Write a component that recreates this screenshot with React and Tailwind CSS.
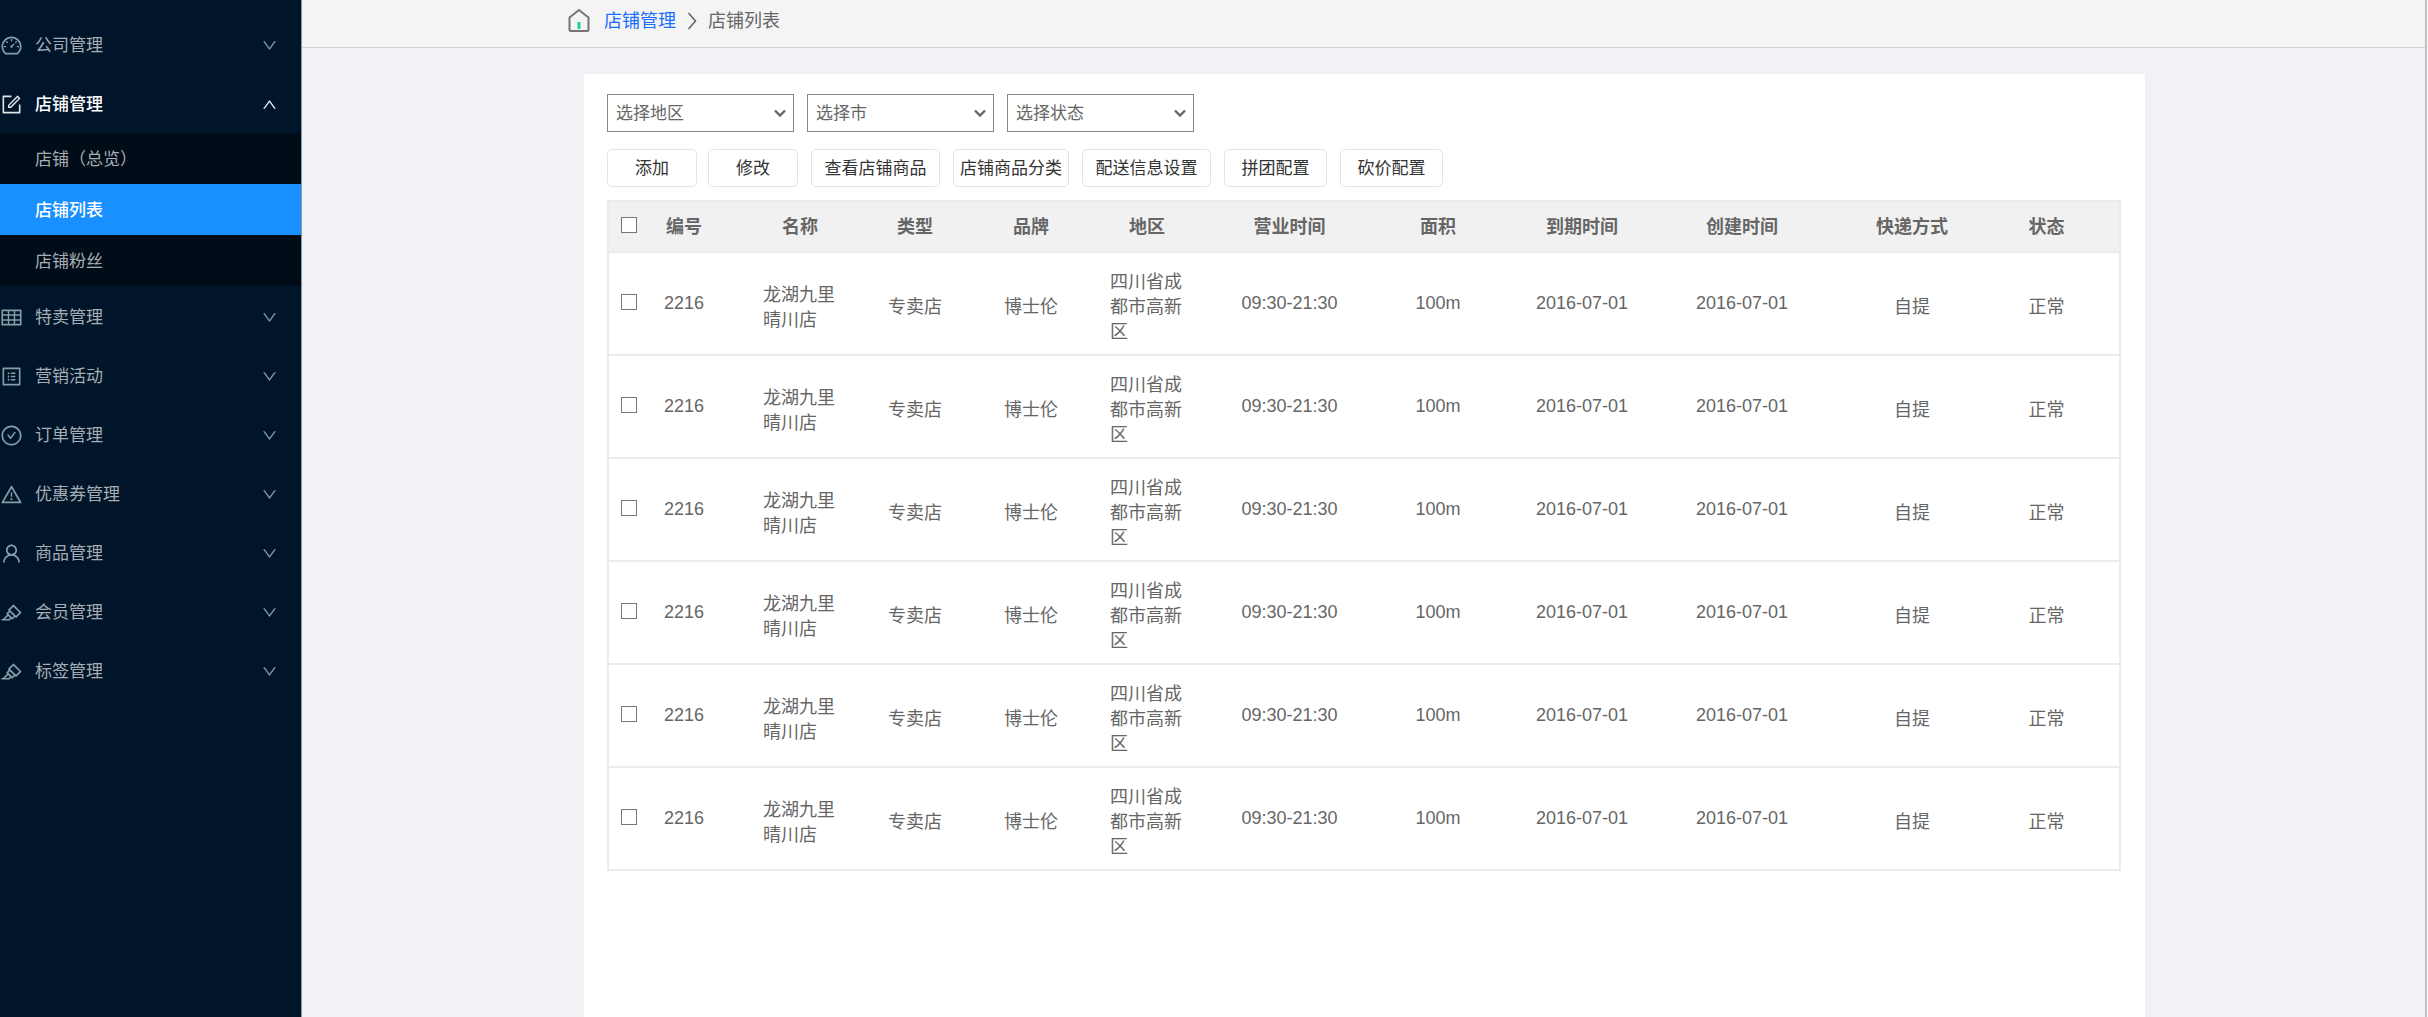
import { useState } from "react"
import {
  AiOutlineDashboard,
  AiOutlineForm,
  AiOutlineTable,
  AiOutlineProfile,
  AiOutlineCheckCircle,
  AiOutlineWarning,
  AiOutlineUser,
  AiOutlineHighlight,
  AiOutlineDown,
  AiOutlineUp
} from "react-icons/ai"

const menus = [
  { name: "公司管理", icon: AiOutlineDashboard },
  {
    name: "店铺管理",
    icon: AiOutlineForm,
    children: ["店铺（总览）", "店铺列表", "店铺粉丝"]
  },
  { name: "特卖管理", icon: AiOutlineTable },
  { name: "营销活动", icon: AiOutlineProfile },
  { name: "订单管理", icon: AiOutlineCheckCircle },
  { name: "优惠券管理", icon: AiOutlineWarning },
  { name: "商品管理", icon: AiOutlineUser },
  { name: "会员管理", icon: AiOutlineHighlight },
  { name: "标签管理", icon: AiOutlineHighlight }
]

const filters = ["选择地区", "选择市", "选择状态"]

const columns = [
  { title: "编号", width: 94 },
  { title: "名称", width: 138 },
  { title: "类型", width: 92 },
  { title: "品牌", width: 140 },
  { title: "地区", width: 92 },
  { title: "营业时间", width: 193 },
  { title: "面积", width: 104 },
  { title: "到期时间", width: 184 },
  { title: "创建时间", width: 136 },
  { title: "快递方式", width: 204 },
  { title: "状态", width: 106 }
]

const stores = Array.from({ length: 6 }, (_, i) => ({
  key: i,
  id: "2216",
  name: "龙湖九里晴川店",
  type: "专卖店",
  brand: "博士伦",
  area: "四川省成都市高新区",
  hours: "09:30-21:30",
  size: "100m",
  expire: "2016-07-01",
  created: "2016-07-01",
  express: "自提",
  status: "正常"
}))

function Sidebar() {
  const [open, setOpen] = useState("店铺管理")
  const [active, setActive] = useState("店铺列表")

  return (
    <nav className="w-[302px] shrink-0 bg-[#001529] border-r border-[#8c97a3] pt-[15px] text-[17px]">
      {menus.map(m => {
        const isOpen = open === m.name
        const Icon = m.icon
        return (
          <div key={m.name}>
            <button
              onClick={() => setOpen(isOpen ? "" : m.name)}
              className={`flex items-center w-full h-[59px] pt-0.5 pr-[23px] text-left ${
                isOpen ? "text-white" : "text-[#a6adb4]"
              }`}
            >
              <Icon
                size={23}
                className={isOpen ? "text-[#dfe5e8]" : "text-[#82a0a8]"}
              />
              <span className={`ml-3 flex-1 ${isOpen ? "font-medium" : ""}`}>
                {m.name}
              </span>
              {isOpen ? (
                <AiOutlineUp size={17} className="text-[#dfe5e8]" />
              ) : (
                <AiOutlineDown size={17} className="text-[#7a98a1]" />
              )}
            </button>

            {m.children && isOpen && (
              <div className="bg-[#000c17] mb-px">
                {m.children.map(c => (
                  <a
                    key={c}
                    href="#"
                    onClick={() => setActive(c)}
                    className={`flex items-center h-[51px] pt-0.5 pl-[35px] ${
                      active === c
                        ? "bg-[#1890ff] text-white font-medium"
                        : "text-[#a6adb4]"
                    }`}
                  >
                    {c}
                  </a>
                ))}
              </div>
            )}
          </div>
        )
      })}
    </nav>
  )
}

function Breadcrumb() {
  return (
    <header className="h-12 bg-[#f4f4f4] border-b border-[#d4d4d4] pl-0.5">
      <div className="max-w-[1593px] mx-auto h-[42px] flex items-center text-[18px]">
        <svg width="22" height="24" viewBox="0 0 22 24" fill="none">
          <path
            d="M1.5 8.5 L11 1 L20.5 8.5 V20.5 Q20.5 22 19 22 H3 Q1.5 22 1.5 20.5 Z"
            stroke="#757575"
            strokeWidth="2"
            strokeLinejoin="round"
          />
          <path d="M11 13 V20" stroke="#1fd0a3" strokeWidth="3" />
        </svg>
        <a href="#" className="ml-[14px] text-[#1a6dff]">店铺管理</a>
        <svg width="10" height="18" viewBox="0 0 10 18" fill="none" className="mx-[11px]">
          <path d="M1.5 1 L8.5 9 L1.5 17" stroke="#666" strokeWidth="1.6" />
        </svg>
        <span className="text-[#666]">店铺列表</span>
      </div>
    </header>
  )
}

function FilterSelect({ label }) {
  return (
    <div className="relative w-[187px]">
      <select
        aria-label={label}
        className="appearance-none w-full h-[38px] pt-0.5 pl-2 bg-white border border-[#858585] text-[17px] text-[#666]"
      >
        <option>{label}</option>
      </select>
      <svg
        width="12"
        height="8"
        viewBox="0 0 12 8"
        fill="none"
        className="absolute right-2 top-[15px] pointer-events-none"
      >
        <path d="M1 1.5 L6 6.5 L11 1.5" stroke="#666" strokeWidth="2.4" />
      </svg>
    </div>
  )
}

function ToolButton({ children, className }) {
  return (
    <button
      className={`h-[38px] pt-0.5 bg-white border border-[#e4e4e4] rounded-[5px] text-[17px] text-[#333] ${className}`}
    >
      {children}
    </button>
  )
}

function Check({ label }) {
  return (
    <input
      type="checkbox"
      aria-label={label}
      className="appearance-none block w-4 h-4 ml-3 bg-white border border-[#767676] checked:bg-[#1890ff]"
    />
  )
}

function StoreTable() {
  return (
    <table className="w-full table-fixed border-collapse border-2 border-[#ebebeb] text-[18px] leading-[25px] text-[#666] text-center">
      <colgroup>
        <col style={{ width: 29 }} />
        {columns.map(c => (
          <col key={c.title} style={{ width: c.width }} />
        ))}
      </colgroup>
      <thead>
        <tr className="h-[51px] bg-[#f1f1f1] border-b-2 border-[#ebebeb]">
          <th className="pb-1">
            <Check label="全选" />
          </th>
          {columns.map(c => (
            <th key={c.title} className="pt-0.5 font-bold last:pr-10">
              {c.title}
            </th>
          ))}
        </tr>
      </thead>
      <tbody>
        {stores.map(s => (
          <tr key={s.key} className="h-[103px] border-b-2 border-[#ebebeb]">
            <td className="pb-1">
              <Check label={`选择 ${s.id}`} />
            </td>
            <td>{s.id}</td>
            <td className="pt-2">
              <div className="w-[74px] mx-auto text-left">{s.name}</div>
            </td>
            <td className="pt-2">{s.type}</td>
            <td className="pt-2">{s.brand}</td>
            <td className="pt-2">
              <div className="w-[74px] mx-auto text-left">{s.area}</div>
            </td>
            <td>{s.hours}</td>
            <td>{s.size}</td>
            <td>{s.expire}</td>
            <td>{s.created}</td>
            <td className="pt-2">{s.express}</td>
            <td className="pt-2 pr-10">{s.status}</td>
          </tr>
        ))}
      </tbody>
    </table>
  )
}

export default function App() {
  return (
    <div className="flex min-h-screen bg-white pr-px font-['Liberation_Sans','Noto_Sans_CJK_SC',sans-serif]">
      <Sidebar />
      <div className="flex-1 min-w-0 flex flex-col bg-[#f0f2f5] border-r-2 border-[#c0c0c0]">
        <Breadcrumb />
        <div className="flex-1 flex pt-[26px] pl-0.5">
          <main className="w-full max-w-[1561px] mx-auto bg-white pt-5 pl-[23px] pr-[26px]">
            <div className="flex gap-[13px]">
              {filters.map(f => (
                <FilterSelect key={f} label={f} />
              ))}
            </div>
            <div className="flex gap-[13px] mt-[17px] mb-[13px]">
              <div className="flex gap-[11px]">
                <ToolButton className="w-[90px]">添加</ToolButton>
                <ToolButton className="w-[90px]">修改</ToolButton>
              </div>
              <ToolButton className="w-[129px]">查看店铺商品</ToolButton>
              <ToolButton className="w-[116px]">店铺商品分类</ToolButton>
              <ToolButton className="w-[129px]">配送信息设置</ToolButton>
              <ToolButton className="w-[103px]">拼团配置</ToolButton>
              <ToolButton className="w-[103px]">砍价配置</ToolButton>
            </div>
            <StoreTable />
          </main>
        </div>
      </div>
    </div>
  )
}
